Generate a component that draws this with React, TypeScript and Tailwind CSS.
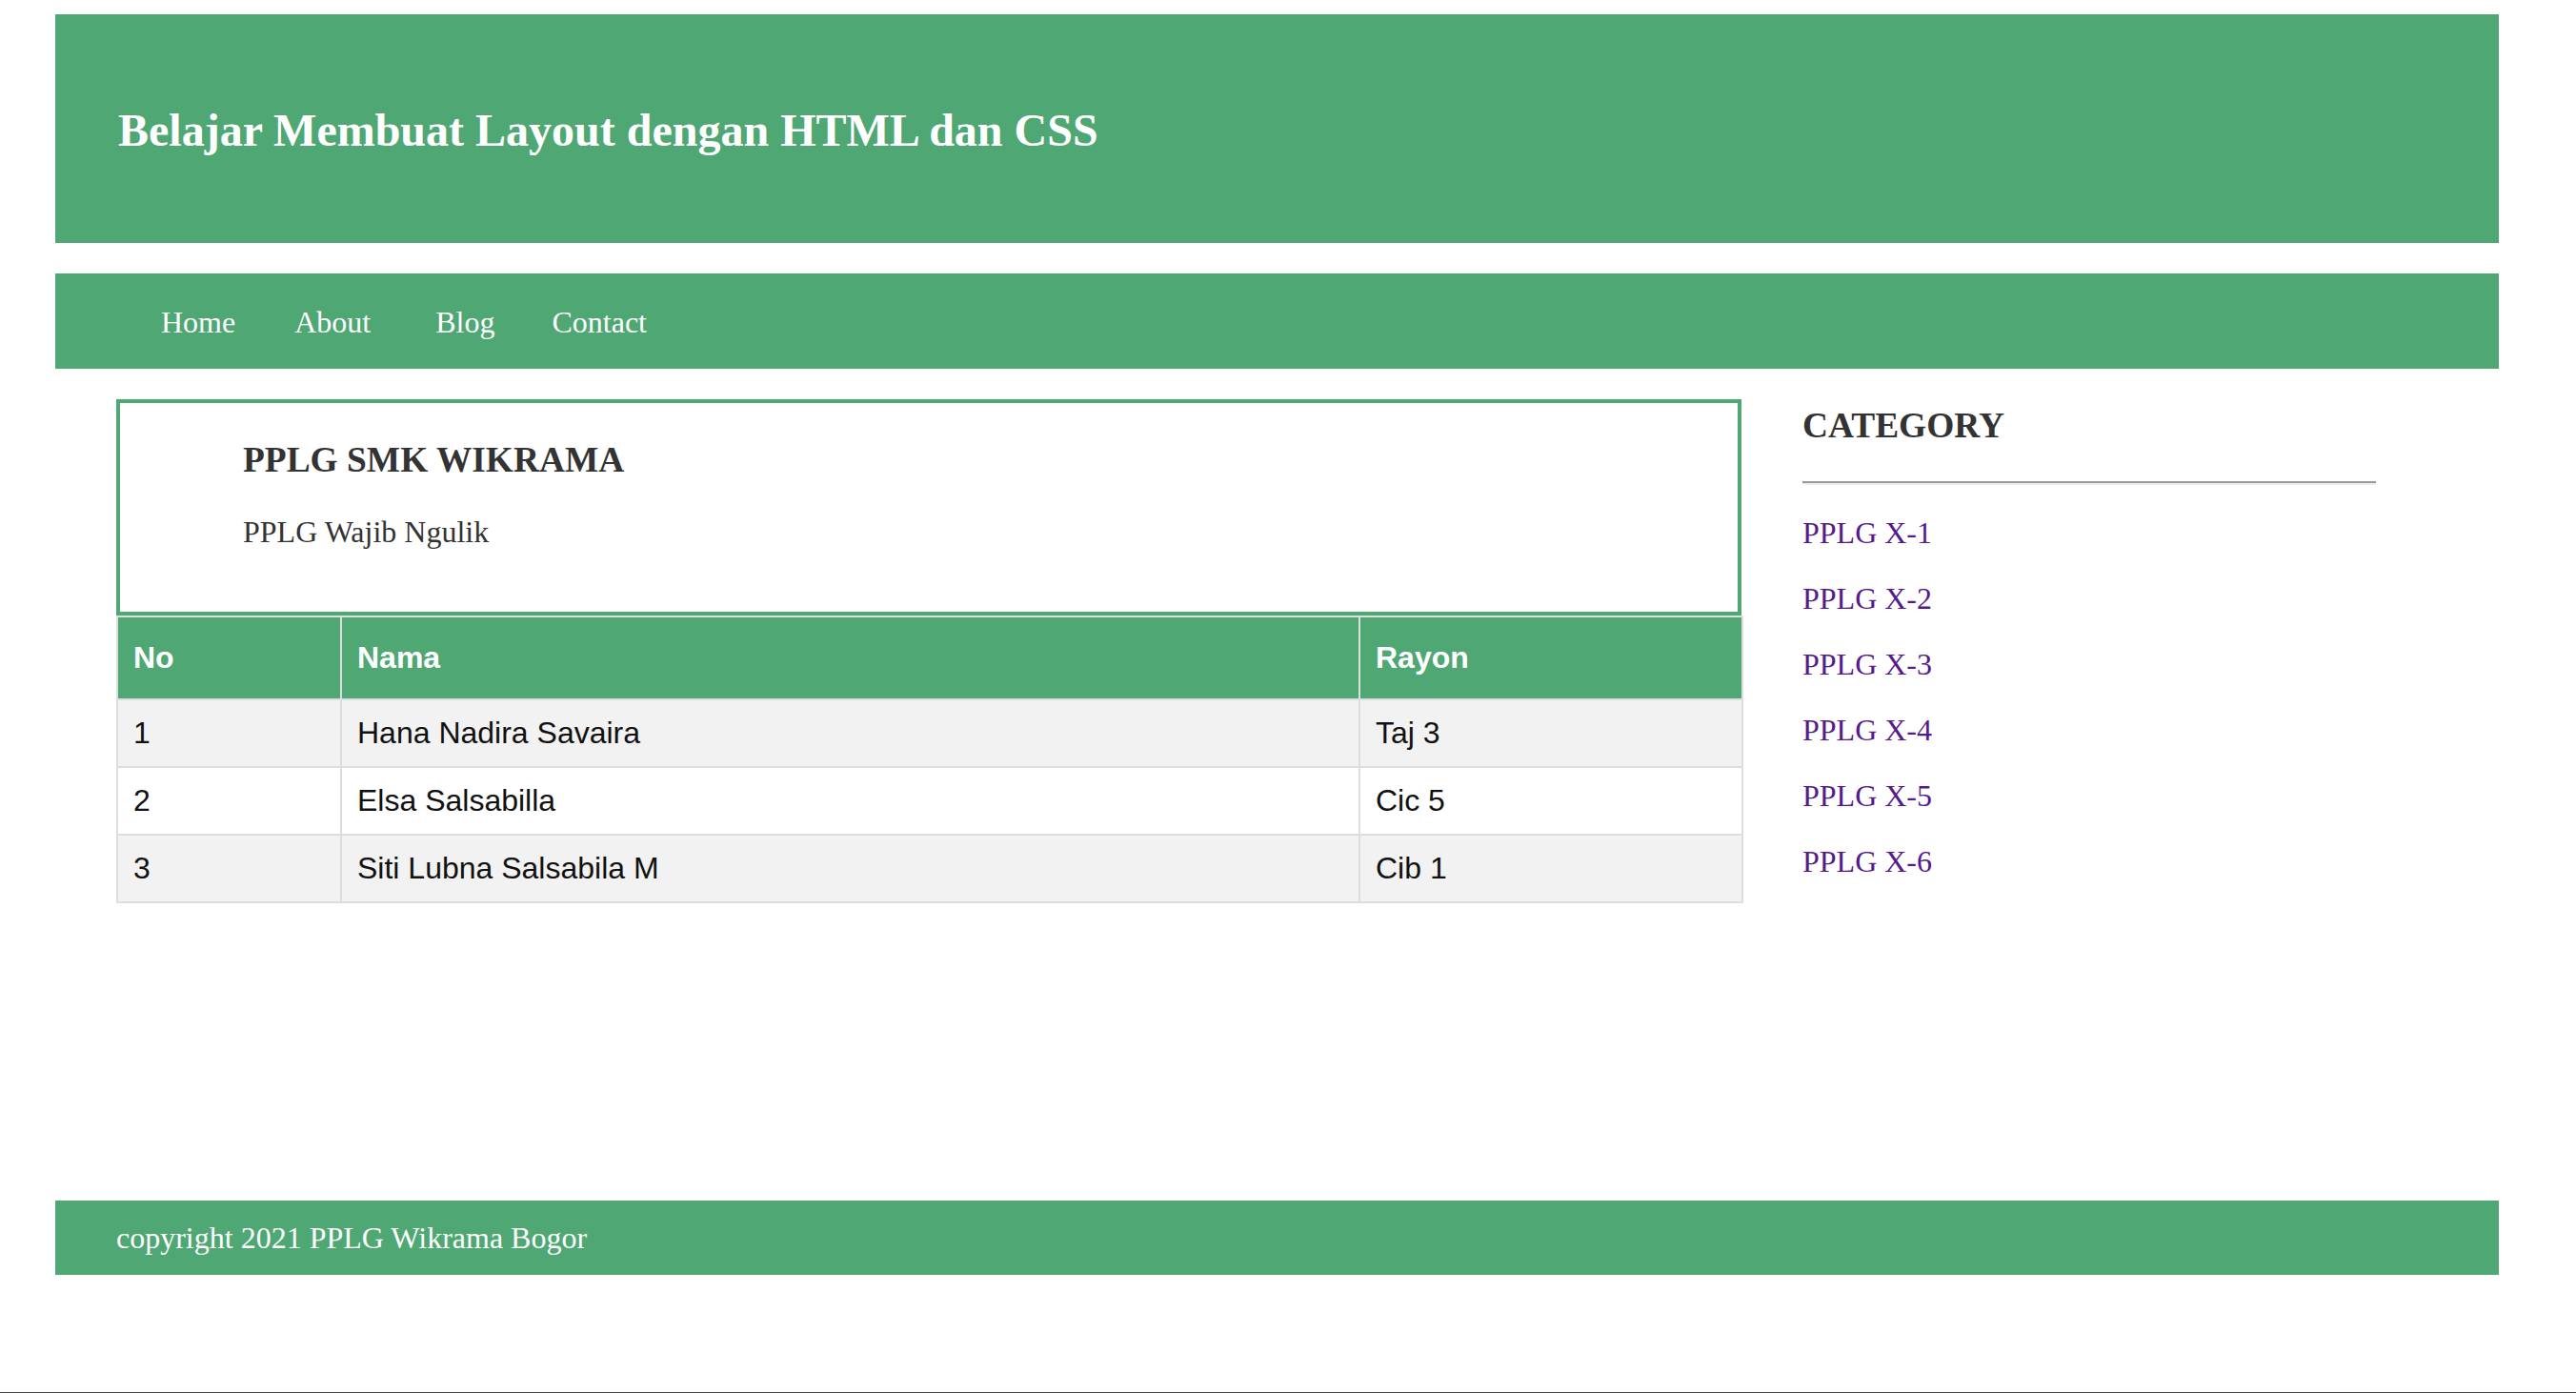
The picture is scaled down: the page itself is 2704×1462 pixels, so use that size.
const links = ["Home", "About", "Blog", "Contact"];
const linkGaps = ["ml-[111px]", "ml-[62px]", "ml-[68px]", "ml-[60px]"];

const rows = [
  { no: "1", nama: "Hana Nadira Savaira", rayon: "Taj 3" },
  { no: "2", nama: "Elsa Salsabilla", rayon: "Cic 5" },
  { no: "3", nama: "Siti Lubna Salsabila M", rayon: "Cib 1" },
];

const categories = ["PPLG X-1", "PPLG X-2", "PPLG X-3", "PPLG X-4", "PPLG X-5", "PPLG X-6"];

function App() {
  return (
    <div className="h-[1462px] w-full border-b border-[#454545] bg-white pt-[15px] font-['Liberation_Serif','Times_New_Roman',serif] text-[#333]">
      {/* header */}
      <header className="ml-[58px] h-[240px] w-[2565px] bg-[#4fa774] pl-[66px] pt-[94px]">
        <h1 className="text-[48px] font-bold leading-[56px] text-white">
          Belajar Membuat Layout dengan HTML dan CSS
        </h1>
      </header>

      {/* nav */}
      <nav className="ml-[58px] mt-[32px] flex h-[100px] w-[2565px] items-start bg-[#4fa774] pt-[33px]">
        {links.map((link, i) => (
          <a key={link} href="#" className={`${linkGaps[i]} text-[32px] leading-[37px] text-white`}>
            {link}
          </a>
        ))}
      </nav>

      {/* main */}
      <main className="ml-[58px] flex h-[873px] w-[2565px] pl-[64px] pt-[32px]">
        <div className="w-[1706px]">
          <div className="h-[227px] border-4 border-[#4fa774] pl-[129px] pt-[38px]">
            <h3 className="text-[37.4px] font-bold leading-[43px] text-[#333]">PPLG SMK WIKRAMA</h3>
            <p className="mt-[36px] text-[32px] leading-[37px] text-[#333]">PPLG Wajib Ngulik</p>
          </div>
          <table className="w-full table-fixed border-collapse font-['Liberation_Sans',Arial,sans-serif] text-[32px] leading-[37px] text-[#111]">
            <colgroup>
              <col className="w-[235px]" />
              <col className="w-[1069px]" />
              <col className="w-[402px]" />
            </colgroup>
            <thead>
              <tr className="bg-[#4fa774] text-white">
                <th className="border-2 border-[#ddd] px-4 py-6 text-left font-bold">No</th>
                <th className="border-2 border-[#ddd] px-4 py-6 text-left font-bold">Nama</th>
                <th className="border-2 border-[#ddd] px-4 py-6 text-left font-bold">Rayon</th>
              </tr>
            </thead>
            <tbody>
              {rows.map((r, i) => (
                <tr key={r.no} className={i % 2 === 0 ? "bg-[#f2f2f2]" : "bg-white"}>
                  <td className="border-2 border-[#ddd] px-4 py-4">{r.no}</td>
                  <td className="border-2 border-[#ddd] px-4 py-4">{r.nama}</td>
                  <td className="border-2 border-[#ddd] px-4 py-4">{r.rayon}</td>
                </tr>
              ))}
            </tbody>
          </table>
        </div>

        <aside className="ml-[64px] w-[602px] pt-[6px]">
          <h3 className="text-[37.4px] font-bold leading-[43px] text-[#333]">CATEGORY</h3>
          <div className="mt-[37px] h-[4px] border-t-2 border-b-2 border-t-[#9a9a9a] border-b-[#eeeeee]" />
          <ul className="mt-[32px] flex flex-col gap-[32px]">
            {categories.map((c) => (
              <li key={c}>
                <a href="#" className="text-[32px] leading-[37px] text-[#551a8b]">
                  {c}
                </a>
              </li>
            ))}
          </ul>
        </aside>
      </main>

      {/* footer */}
      <footer className="ml-[58px] flex h-[78px] w-[2565px] items-center bg-[#4fa774] pl-[64px]">
        <p className="text-[32px] leading-[37px] text-white">copyright 2021 PPLG Wikrama Bogor</p>
      </footer>
    </div>
  );
}

export default App;
